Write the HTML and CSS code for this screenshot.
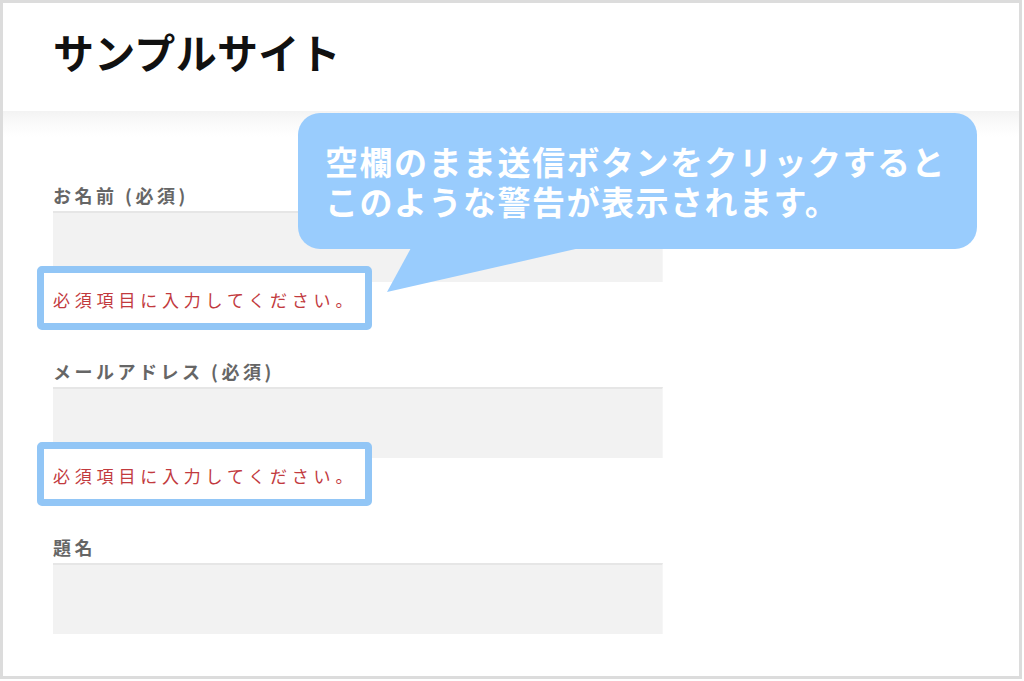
FILE: index.html
```html
<!DOCTYPE html>
<html lang="ja">
<head>
<meta charset="utf-8">
<title>サンプルサイト</title>
<link rel="stylesheet" href="styles.css">
</head>
<body>
<div class="frame">
  <header class="header">
    <h1 class="site-title">サンプルサイト</h1>
  </header>
  <main class="main">
    <div class="field">
      <p class="field-label">お名前 (必須)</p>
      <div class="input"></div>
      <p class="error">必須項目に入力してください。</p>
    </div>
    <div class="field">
      <p class="field-label">メールアドレス (必須)</p>
      <div class="input"></div>
      <p class="error">必須項目に入力してください。</p>
    </div>
    <div class="field">
      <p class="field-label">題名</p>
      <div class="input"></div>
    </div>
  </main>
  <div class="callout">
    <p class="callout-text">空欄のまま送信ボタンをクリックすると<br>このような警告が表示されます。</p>
  </div>
</div>
</body>
</html>
```
FILE: styles.css
```css
html, body {
  margin: 0;
  padding: 0;
  background: #ffffff;
}

body {
  font-family: "Noto Sans CJK JP", "Noto Sans", sans-serif;
}

.frame {
  position: relative;
  width: 1022px;
  height: 679px;
  box-sizing: border-box;
  border: 3px solid #dcdcdc;
  overflow: hidden;
  background: #ffffff;
}

.header {
  height: 108px;
  box-sizing: border-box;
  padding: 24px 0 0 50px;
  background: #ffffff;
}

.site-title {
  margin: 0;
  font-size: 41px;
  line-height: 48px;
  font-weight: 700;
  letter-spacing: 0.3px;
  color: #111111;
}

.main {
  height: 568px;
  box-sizing: border-box;
  padding: 72px 50px 0;
  background: linear-gradient(#f3f3f3 0, #fafafa 12px, #ffffff 26px);
}

.field {
  margin-bottom: 29px;
}

.field-label {
  margin: 0;
  font-size: 18px;
  line-height: 24px;
  font-weight: 700;
  letter-spacing: 3.5px;
  color: #666666;
}

.input {
  margin-top: 4px;
  width: 610px;
  height: 71px;
  box-sizing: border-box;
  background: #f2f2f2;
  border-top: 2px solid #e6e6e6;
  border-right: 1px solid #f6f6f6;
}

.error {
  position: relative;
  width: 335px;
  box-sizing: border-box;
  margin: -16px 0 0 -16px;
  padding: 15px 0 11px 9px;
  border: 7px solid #92c6f6;
  border-radius: 5px;
  background: #ffffff;
  font-size: 17px;
  line-height: 24px;
  letter-spacing: 4.8px;
  color: #c23a3e;
  white-space: nowrap;
}

.callout {
  position: absolute;
  left: 295px;
  top: 110px;
  width: 679px;
  height: 136px;
  box-sizing: border-box;
  padding-left: 27px;
  display: flex;
  align-items: center;
  background: #99ccfd;
  border-radius: 22px;
}

.callout::after {
  content: "";
  position: absolute;
  left: 89px;
  top: 135px;
  width: 193px;
  height: 44px;
  background: #99ccfd;
  clip-path: polygon(24px 0, 0 100%, 100% 0);
}

.callout-text {
  margin: 0;
  font-size: 33px;
  line-height: 40px;
  font-weight: 700;
  letter-spacing: 1.5px;
  color: #ffffff;
  white-space: nowrap;
}
```
